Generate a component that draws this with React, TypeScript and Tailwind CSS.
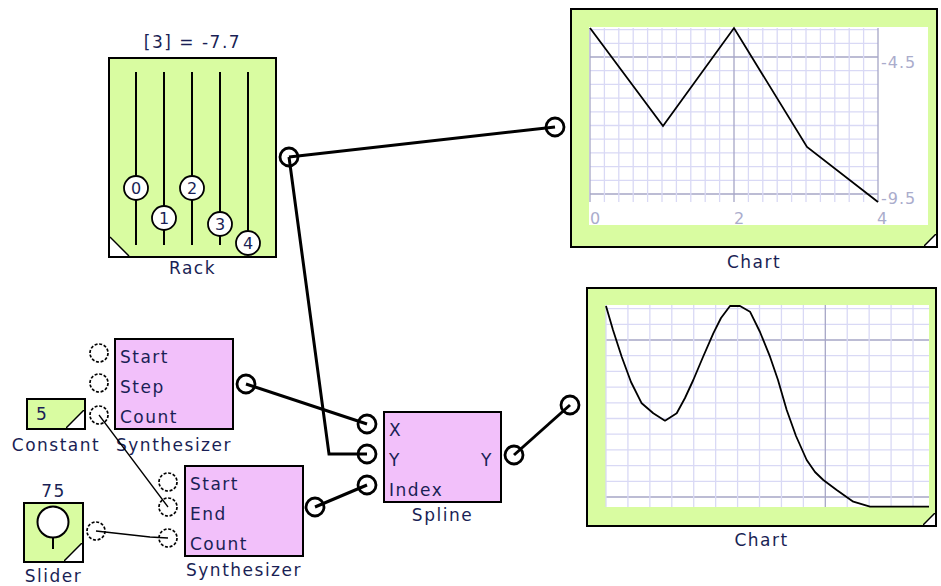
import React from "react"

const chart1Grid = {
  vx: Array.from({ length: 21 }, (_, i) => 590 + i * 14.4),
  hy: Array.from({ length: 13 }, (_, j) => 194 - j * 13.7),
}

const chart2Grid = {
  vx: Array.from({ length: 15 }, (_, i) => 606 + i * 21.93),
  hy: Array.from({ length: 13 }, (_, j) => 497 - j * 15.7),
}

const chart2Curve = [
  [606, 306], [613, 330], [621.7, 356.7], [631, 382], [641.7, 403.3], [653.3, 413.3], [665, 420.7], [676.7, 413.3],
  [685, 398], [693.3, 380], [703, 357], [713.3, 333.3], [721, 318], [730, 306], [740, 306], [750, 311.7], [760, 332], [770, 356.7],
  [778, 380], [786.7, 410], [796, 436], [806.7, 460], [815, 472], [823.3, 480], [836.7, 490], [853.3, 501.7], [870, 506.7], [929, 506.7],
]

const knobs = [
  { n: "0", x: 136, y: 188 },
  { n: "1", x: 164, y: 218 },
  { n: "2", x: 192, y: 188 },
  { n: "3", x: 220, y: 224 },
  { n: "4", x: 248, y: 243 },
]

// ports: solid = wired with a thick wire, dashed = free or thin wire
const ports = [
  { x: 289, y: 157 },
  { x: 555, y: 127 },
  { x: 99, y: 353, dashed: true },
  { x: 99, y: 383, dashed: true },
  { x: 99, y: 415, dashed: true },
  { x: 246, y: 384 },
  { x: 168, y: 482, dashed: true },
  { x: 168, y: 507, dashed: true },
  { x: 168, y: 538, dashed: true },
  { x: 315, y: 507 },
  { x: 96, y: 531, dashed: true },
  { x: 367, y: 424 },
  { x: 367, y: 454 },
  { x: 367, y: 485 },
  { x: 514, y: 455 },
  { x: 570, y: 405 },
]

const thickWires = [
  "289,157 555,127",
  "289,157 329,454 367,454",
  "246,384 367,424",
  "315,507 367,485",
  "514,455 570,405",
]

const thinWires = ["99,415 168,507", "96,531 150,537 168,538"]

function Corner({ size }: { size: number }) {
  return (
    <svg className="absolute right-0 bottom-0" width={size} height={size} viewBox={`0 0 ${size} ${size}`}>
      <polygon points={`0,${size} ${size},0 ${size},${size}`} fill="white" />
      <line x1="0" y1={size} x2={size} y2="0" stroke="black" strokeWidth="1.5" />
    </svg>
  )
}

export default function App() {
  return (
    <div className="relative w-[941px] h-[586px] overflow-hidden bg-white font-['DejaVu_Sans',sans-serif] text-[17px] tracking-[1.5px] text-[#1a1f55]">
      {/* Rack */}
      <div className="absolute left-[108px] top-[32px] w-[169px] flex flex-col items-center">
        <div className="leading-[20px] mb-[5px] whitespace-nowrap">[3] = -7.7</div>
        <div className="relative w-[169px] h-[201px] border-2 border-black bg-[#d9fca1]">
          <svg width="165" height="197" viewBox="110 59 165 197" className="block">
            {knobs.map((k) => (
              <line key={"l" + k.n} x1={k.x} y1="72" x2={k.x} y2="245" stroke="black" strokeWidth="2" />
            ))}
            {knobs.map((k) => (
              <g key={k.n}>
                <circle cx={k.x} cy={k.y} r="12" fill="white" stroke="black" strokeWidth="1.8" />
                <text x={k.x} y={k.y + 6} textAnchor="middle" fontSize="16" fill="#1a1f55" letterSpacing="0">
                  {k.n}
                </text>
              </g>
            ))}
            <polygon points="110,237 110,256 129,256" fill="white" />
            <line x1="110" y1="237" x2="129" y2="256" stroke="black" strokeWidth="1.5" />
          </svg>
        </div>
        <div className="leading-[20px] whitespace-nowrap">Rack</div>
      </div>

      {/* Chart 1 */}
      <div className="absolute left-[570px] top-[8px] w-[368px] flex flex-col items-center">
        <div className="relative w-[368px] h-[240px] border-2 border-black bg-[#d9fca1]">
          <svg width="364" height="236" viewBox="572 10 364 236" className="block">
            <rect x="589" y="27" width="339" height="198" fill="white" />
            {chart1Grid.hy.map((y, j) => (
              <line key={"h" + j} x1="590" y1={y} x2="878" y2={y} stroke={j === 0 || j === 10 ? "#a6a6c6" : "#d9d9f5"} strokeWidth="1.3" />
            ))}
            {chart1Grid.vx.map((x, i) => (
              <line key={"v" + i} x1={x} y1="28" x2={x} y2="202" stroke={i === 10 || i === 0 || i === 20 ? "#a6a6c6" : "#d9d9f5"} strokeWidth="1.3" />
            ))}
            <polyline points="590,28 663,126 734,28 807,147 878,202" fill="none" stroke="black" strokeWidth="1.8" />
            <g fontSize="16" fill="#aaaccc" letterSpacing="1">
              <text x="881" y="68">-4.5</text>
              <text x="881" y="204">-9.5</text>
              <text x="590" y="224">0</text>
              <text x="734" y="224">2</text>
              <text x="877" y="224">4</text>
            </g>
          </svg>
          <Corner size={12} />
        </div>
        <div className="mt-[4px] leading-[20px] whitespace-nowrap">Chart</div>
      </div>

      {/* Chart 2 */}
      <div className="absolute left-[586px] top-[287px] w-[351px] flex flex-col items-center">
        <div className="relative w-[351px] h-[240px] border-2 border-black bg-[#d9fca1]">
          <svg width="347" height="236" viewBox="588 289 347 236" className="block">
            <rect x="606" y="305" width="323" height="202" fill="white" />
            {chart2Grid.hy.map((y, j) => (
              <line key={"h" + j} x1="606" y1={y} x2="929" y2={y} stroke={j === 0 || j === 10 ? "#a6a6c6" : "#d9d9f5"} strokeWidth="1.3" />
            ))}
            {chart2Grid.vx.map((x, i) => (
              <line key={"v" + i} x1={x} y1="305" x2={x} y2="507" stroke={i === 10 ? "#a6a6c6" : "#d9d9f5"} strokeWidth="1.3" />
            ))}
            <polyline points={chart2Curve.map((p) => p.join(",")).join(" ")} fill="none" stroke="black" strokeWidth="1.8" strokeLinejoin="round" />
          </svg>
          <Corner size={12} />
        </div>
        <div className="mt-[3px] leading-[20px] whitespace-nowrap">Chart</div>
      </div>

      {/* Synthesizer 1 */}
      <div className="absolute left-[114px] top-[338px] w-[120px] flex flex-col items-center">
        <div className="w-[120px] h-[92px] border-2 border-black bg-[#f2c0fa] flex flex-col self-stretch pl-[4px] pt-[2px] leading-[30px]">
          <span>Start</span>
          <span>Step</span>
          <span>Count</span>
        </div>
        <div className="mt-[5px] leading-[20px] whitespace-nowrap">Synthesizer</div>
      </div>

      {/* Constant */}
      <div className="absolute left-[26px] top-[398px] w-[60px] flex flex-col items-center">
        <div className="relative w-[60px] h-[32px] border-2 border-black bg-[#d9fca1] pl-[8px] leading-[28px] self-stretch">
          5
          <Corner size={18} />
        </div>
        <div className="mt-[5px] leading-[20px] whitespace-nowrap">Constant</div>
      </div>

      {/* Synthesizer 2 */}
      <div className="absolute left-[184px] top-[465px] w-[120px] flex flex-col items-center">
        <div className="w-[120px] h-[92px] border-2 border-black bg-[#f2c0fa] flex flex-col self-stretch pl-[4px] pt-[2px] leading-[30px]">
          <span>Start</span>
          <span>End</span>
          <span>Count</span>
        </div>
        <div className="mt-[3px] leading-[20px] whitespace-nowrap">Synthesizer</div>
      </div>

      {/* Slider */}
      <div className="absolute left-[23px] top-[481px] w-[61px] flex flex-col items-center">
        <div className="leading-[20px] mb-[1px] whitespace-nowrap">75</div>
        <div className="relative w-[61px] h-[61px] border-2 border-black bg-[#d9fca1]">
          <svg width="57" height="57" viewBox="25 504 57 57" className="block">
            <line x1="53" y1="537" x2="53" y2="549" stroke="black" strokeWidth="2" />
            <circle cx="53" cy="522" r="15.5" fill="white" stroke="black" strokeWidth="2" />
          </svg>
          <Corner size={18} />
        </div>
        <div className="mt-[3px] leading-[20px] whitespace-nowrap">Slider</div>
      </div>

      {/* Spline */}
      <div className="absolute left-[383px] top-[411px] w-[119px] flex flex-col items-center">
        <div className="w-[119px] h-[92px] border-2 border-black bg-[#f2c0fa] flex flex-col self-stretch pl-[4px] pr-[7px] pt-[2px] leading-[30px]">
          <span>X</span>
          <div className="flex justify-between">
            <span>Y</span>
            <span>Y</span>
          </div>
          <span>Index</span>
        </div>
        <div className="mt-[2px] leading-[20px] whitespace-nowrap">Spline</div>
      </div>

      {/* Wires and ports */}
      <svg className="absolute inset-0 pointer-events-none" width="941" height="586">
        {ports.map((p, i) =>
          p.dashed ? (
            <circle key={i} cx={p.x} cy={p.y} r="9" fill="white" stroke="black" strokeWidth="1.7" strokeDasharray="3 1.7" />
          ) : (
            <circle key={i} cx={p.x} cy={p.y} r="9" fill="white" stroke="black" strokeWidth="2.8" />
          )
        )}
        {thickWires.map((w) => (
          <polyline key={w} points={w} fill="none" stroke="black" strokeWidth="3" strokeLinejoin="miter" />
        ))}
        {thinWires.map((w) => (
          <polyline key={w} points={w} fill="none" stroke="black" strokeWidth="1.3" />
        ))}
      </svg>
    </div>
  )
}
